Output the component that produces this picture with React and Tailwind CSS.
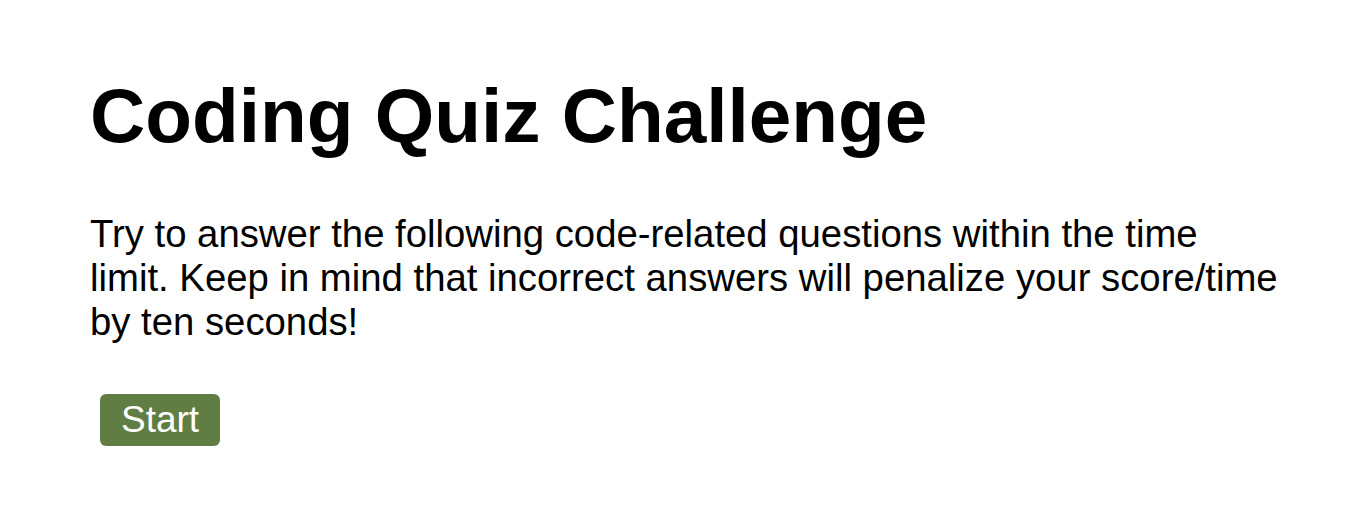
import React from 'react';

const App = () => {
  return (
    <div className="min-h-screen bg-white text-black font-['Liberation_Sans',Arial,sans-serif]">
      <div className="pl-[90px] pt-[72px]">
        <h1 className="text-[76.5px] font-bold leading-[normal]">Coding Quiz Challenge</h1>
        <p className="mt-[52px] w-[1193px] text-[38.3px] leading-[normal]">
          Try to answer the following code-related questions within the time limit. Keep in mind that incorrect answers will penalize your score/time by ten seconds!
        </p>
        <button
          type="button"
          className="mt-[50px] ml-[10px] px-[21px] py-[5px] rounded-[6px] bg-[#607e44] text-white text-[37px] leading-[normal]"
        >
          Start
        </button>
      </div>
    </div>
  );
};

export default App;
